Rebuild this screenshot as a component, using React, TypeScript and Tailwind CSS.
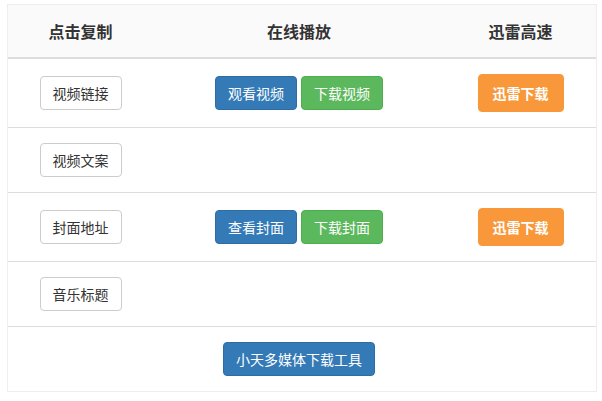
const btnBase =
  "inline-block rounded-[4px] border text-[14px] leading-[20px] px-[12px] py-[6px] align-middle";

function CopyButton({ label }: { label: string }) {
  return <button className={`${btnBase} bg-white border-[#ccc] text-[#333]`}>{label}</button>;
}

function BlueButton({ label }: { label: string }) {
  return <button className={`${btnBase} bg-[#337ab7] border-[#2e6da4] text-white`}>{label}</button>;
}

function GreenButton({ label }: { label: string }) {
  return <button className={`${btnBase} bg-[#5cb85c] border-[#4cae4c] text-white`}>{label}</button>;
}

function ThunderButton() {
  return (
    <button className="inline-block rounded-[4px] border border-[#f8983a] bg-[#f8983a] text-white text-[14px] leading-[20px] px-[14px] py-[8px] font-bold align-middle">
      迅雷下载
    </button>
  );
}

const cell = "py-[15px] text-center align-middle";

export default function App() {
  return (
    <div className="min-h-screen bg-white pt-[4px] pl-[7px] font-['Noto_Sans_CJK_SC',sans-serif]">
      <div className="w-[590px] border border-[#eee]">
        <table className="w-[588px] table-fixed border-collapse">
          <colgroup>
            <col className="w-[145px]" />
            <col className="w-[292px]" />
            <col className="w-[151px]" />
          </colgroup>
          <thead>
            <tr className="bg-[#fafafa] border-b-2 border-[#ddd]">
              <th className={`${cell} text-[16px] leading-[22px] font-bold text-[#333]`}>点击复制</th>
              <th className={`${cell} text-[16px] leading-[22px] font-bold text-[#333]`}>在线播放</th>
              <th className={`${cell} text-[16px] leading-[22px] font-bold text-[#333]`}>迅雷高速</th>
            </tr>
          </thead>
          <tbody>
            <tr className="border-b border-[#ddd]">
              <td className={cell}><CopyButton label="视频链接" /></td>
              <td className={cell}>
                <div className="flex justify-center gap-[4px]">
                  <BlueButton label="观看视频" />
                  <GreenButton label="下载视频" />
                </div>
              </td>
              <td className={cell}><ThunderButton /></td>
            </tr>
            <tr className="border-b border-[#ddd]">
              <td className={cell}><CopyButton label="视频文案" /></td>
              <td className={cell}></td>
              <td className={cell}></td>
            </tr>
            <tr className="border-b border-[#ddd]">
              <td className={cell}><CopyButton label="封面地址" /></td>
              <td className={cell}>
                <div className="flex justify-center gap-[4px]">
                  <BlueButton label="查看封面" />
                  <GreenButton label="下载封面" />
                </div>
              </td>
              <td className={cell}><ThunderButton /></td>
            </tr>
            <tr className="border-b border-[#ddd]">
              <td className={cell}><CopyButton label="音乐标题" /></td>
              <td className={cell}></td>
              <td className={cell}></td>
            </tr>
            <tr>
              <td className={cell}></td>
              <td className={cell}><BlueButton label="小天多媒体下载工具" /></td>
              <td className={cell}></td>
            </tr>
          </tbody>
        </table>
      </div>
    </div>
  );
}
